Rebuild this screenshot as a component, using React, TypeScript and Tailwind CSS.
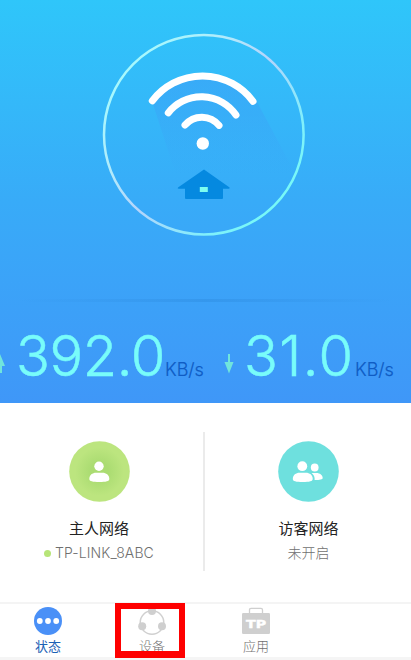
import type { ReactNode } from 'react'

const digits = "font-['Inter','Noto_Sans_CJK_SC',sans-serif]"
const speed = 'text-[56px] leading-[64px] font-light text-[#78fcfa] [-webkit-text-stroke:0.5px_#78fcfa]'
const unit = 'text-[18px] font-light text-[#0f5cc4] [-webkit-text-stroke:0.2px_#0f5cc4]'

function Signal() {
  return (
    <svg className="block shrink-0" width="411" height="290" viewBox="0 0 411 290" fill="none">
      <defs>
        <linearGradient id="ring" x1="120" y1="60" x2="290" y2="205" gradientUnits="userSpaceOnUse">
          <stop offset="0" stopColor="#a4fbfd" />
          <stop offset="0.3" stopColor="#b2eafb" />
          <stop offset="0.5" stopColor="#b5d4fb" />
          <stop offset="0.8" stopColor="#80effb" />
          <stop offset="1" stopColor="#74fbf6" />
        </linearGradient>
        <linearGradient id="shade" x1="0" y1="80" x2="0" y2="175" gradientUnits="userSpaceOnUse">
          <stop offset="0" stopColor="#3e9bf6" stopOpacity="0.5" />
          <stop offset="1" stopColor="#3e9bf6" stopOpacity="0" />
        </linearGradient>
      </defs>
      <path d="M152 101Q202 55 256 100L296 175H176Z" fill="url(#shade)" />
      <circle cx="203.8" cy="134.7" r="99.8" stroke="url(#ring)" strokeWidth="2.5" />
      <g stroke="#fff" strokeWidth="7" strokeLinecap="round">
        <path d="M152.3 100.8A63 63 0 0 1 253 101.3" />
        <path d="M168.3 112.8A42 42 0 0 1 236 115" />
        <path d="M185 125A22 22 0 0 1 219 125.4" />
      </g>
      <circle cx="202.8" cy="143.5" r="6.2" fill="#fff" />
      <path d="M204 169.6L229.6 187.4Q230 188.6 228.5 188.8H223V198Q223 199 222 199H186Q185 199 185 198V188.8H179Q177 188.6 178 187.4Z" fill="#0589e0" />
      <rect x="199.8" y="187" width="8" height="5" fill="#7dfdf0" />
    </svg>
  )
}

function OwnerIcon() {
  return (
    <svg width="61" height="61" viewBox="0 0 61 61">
      <defs>
        <radialGradient id="owner">
          <stop offset="0.3" stopColor="#abdc72" />
          <stop offset="0.8" stopColor="#bce57f" />
        </radialGradient>
      </defs>
      <circle cx="30.5" cy="30.5" r="30.3" fill="url(#owner)" />
      <circle cx="30" cy="25.2" r="4.7" fill="#fff" />
      <path d="M20.3 38C20.3 34 23.5 31.8 27 31.8H33.5C37 31.8 40.3 34 40.3 38C40.3 40.3 37 41 30.3 41S20.3 40.3 20.3 38Z" fill="#fff" />
    </svg>
  )
}

function GuestIcon() {
  return (
    <svg width="61" height="61" viewBox="0 0 61 61">
      <circle cx="30.5" cy="30.5" r="30.3" fill="#6ee0de" />
      <g fill="#fff">
        <circle cx="24.3" cy="25.2" r="4.9" />
        <path d="M14.8 38C14.8 34 18 31.8 21.5 31.8H28C31.5 31.8 34.7 34 34.7 38C34.7 40.3 31.5 41 24.7 41S14.8 40.3 14.8 38Z" />
        <circle cx="36.7" cy="26.5" r="3.9" />
        <path d="M33.6 32H38.5C42 32 44.7 34.2 44.7 37C44.7 38.6 42 39 36.6 39C37 36 35.8 33.7 33.6 32Z" />
      </g>
    </svg>
  )
}

function StatusIcon() {
  return (
    <svg width="30" height="30" viewBox="0 0 30 30">
      <circle cx="15" cy="15" r="14" fill="#4a90f7" />
      <circle cx="6.8" cy="15" r="2.9" fill="#fff" />
      <circle cx="15" cy="15" r="2.9" fill="#fff" />
      <circle cx="23.2" cy="15" r="2.9" fill="#fff" />
    </svg>
  )
}

function DevicesIcon() {
  return (
    <svg width="30" height="30" viewBox="0 0 30 30">
      <circle cx="15" cy="16.5" r="11.8" fill="none" stroke="#d0d0d0" strokeWidth="1.5" />
      <g fill="#cfcfcf">
        <circle cx="15" cy="5" r="4" />
        <circle cx="5.2" cy="20.2" r="4" />
        <circle cx="25" cy="20.2" r="4" />
      </g>
    </svg>
  )
}

function AppsIcon() {
  return (
    <svg width="30" height="30" viewBox="0 0 30 30">
      <path d="M8.5 7.5V4Q8.5 2.3 10 2.3H20Q21.5 2.3 21.5 4V7.5" fill="none" stroke="#cfcfcf" strokeWidth="1.3" />
      <rect x="1" y="7" width="28" height="21" rx="1.2" fill="#cfcfcf" />
      <text x="5" y="22" fontSize="10" fontWeight="700" fill="#fff" stroke="#fff" strokeWidth="0.4" textLength="20" lengthAdjust="spacingAndGlyphs" fontFamily="DejaVu Sans, sans-serif">TP</text>
    </svg>
  )
}

function Tab({ icon, label, active }: { icon: ReactNode; label: string; active?: boolean }) {
  return (
    <div className="flex w-[104px] flex-col items-center pt-[2px]">
      {icon}
      <span className={`mt-px text-[13px] leading-[18px] ${active ? 'text-[#1b61b5]' : 'font-light text-[#707070]'}`}>{label}</span>
    </div>
  )
}

export default function App() {
  return (
    <div className="relative flex h-[660px] w-[411px] flex-col overflow-hidden bg-white font-['Noto_Sans_CJK_SC',sans-serif]">
      <section className="flex h-[403px] shrink-0 flex-col overflow-hidden bg-linear-to-b from-[#2fc6fa] via-[#38abf8] to-[#3f97f8]">
        <Signal />
        <div className="mx-[18px] mt-[9px] h-[3px] shrink-0 bg-linear-to-r from-transparent via-[#3293e8] to-transparent opacity-70" />
        <div className={`mt-[22px] flex h-[64px] items-baseline whitespace-nowrap ${digits}`}>
          <svg className="-ml-[5px] w-[10px] shrink-0" height="22" viewBox="0 0 10 22">
            <path d="M5 0L10 12H7V19H3V12H0Z" fill="#70e5dc" />
          </svg>
          <span className={`ml-[11px] w-[149px] tracking-[-0.4px] ${speed}`}>392.0</span>
          <span className={`w-[38px] ${unit}`}>KB/s</span>
          <svg className="ml-[21px] w-[10px] shrink-0" height="22" viewBox="0 0 10 22">
            <path d="M4 0H6V8H9.5L5 19.5L.5 8H4Z" fill="#70e5dc" />
          </svg>
          <span className={`ml-[10px] w-[111px] tracking-[1.4px] ${speed}`}>31.0</span>
          <span className={unit}>KB/s</span>
        </div>
      </section>

      <section className="flex h-[199px] shrink-0 pt-[29px]">
        <div className="flex w-[203px] flex-col items-center pt-[9px] pr-[5px]">
          <OwnerIcon />
          <h2 className="mt-[15px] text-[15px] leading-[22px] text-[#222]">主人网络</h2>
          <p className={`mt-[4px] flex items-center gap-[4px] text-[14px] leading-[20px] font-light tracking-[0.1px] text-[#6f6f6f] ${digits}`}>
            <span className="size-[7px] rounded-full bg-[#b7e578]" />
            TP-LINK_8ABC
          </p>
        </div>
        <div className="h-[139px] w-[2px] bg-[#ebebeb]" />
        <div className="flex flex-1 flex-col items-center pt-[9px] pl-[1px]">
          <GuestIcon />
          <h2 className="mt-[15px] text-[15px] leading-[22px] text-[#222]">访客网络</h2>
          <p className="mt-[3px] text-[14px] leading-[20px] font-light text-[#6f6f6f]">未开启</p>
        </div>
      </section>

      <nav className="-ml-[4px] flex h-[55px] shrink-0 border-t-2 border-[#f4f4f4]">
        <Tab icon={<StatusIcon />} label="状态" active />
        <Tab icon={<DevicesIcon />} label="设备" />
        <Tab icon={<AppsIcon />} label="应用" />
      </nav>
      <div className="h-[3px] shrink-0 bg-[#f5f5f5]" />

      <div className="absolute top-[603px] left-[115px] h-[55px] w-[70px] border-x-[6px] border-t-[6px] border-b-[7px] border-[#fe0000]" />
    </div>
  )
}
